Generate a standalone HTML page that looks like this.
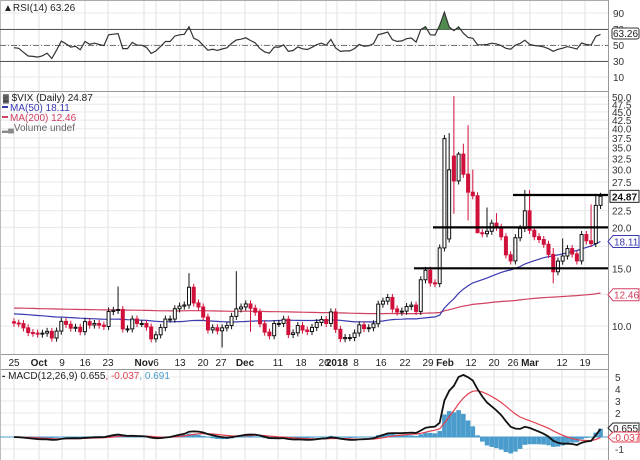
<!DOCTYPE html>
<html><head><meta charset="utf-8"><style>
html,body{margin:0;padding:0;background:#fff;width:640px;height:460px;overflow:hidden}
svg{display:block;font-family:"Liberation Sans",sans-serif}
</style></head><body>
<svg id="s" width="640" height="460" viewBox="0 0 640 460" xmlns="http://www.w3.org/2000/svg"></svg>
<script>
var S=document.getElementById('s');var out=[];
function L(x1,y1,x2,y2,c,w,extra){out.push('<line x1="'+x1+'" y1="'+y1+'" x2="'+x2+'" y2="'+y2+'" stroke="'+c+'" stroke-width="'+(w||1)+'" '+(extra||'')+'/>');}
function R(x,y,w,h,f,st){out.push('<rect x="'+x+'" y="'+y+'" width="'+w+'" height="'+h+'" fill="'+f+'" stroke="'+(st||'none')+'" stroke-width="1"/>');}
function T(x,y,t,s,c,extra){out.push('<text x="'+x+'" y="'+y+'" font-size="'+(s||10)+'" fill="'+(c||'#222')+'" '+(extra||'')+'>'+t+'</text>');}
function P(pts,c,w,extra){out.push('<polyline points="'+pts.map(function(p){return p[0].toFixed(1)+','+p[1].toFixed(1)}).join(' ')+'" fill="none" stroke="'+c+'" stroke-width="'+(w||1)+'" '+(extra||'')+'/>');}
var C=[10.21,10.17,9.87,9.55,9.51,
9.45,9.51,9.63,9.19,9.65,10.33,10.12,9.85,9.91,9.61,10.31,10.07,10.18,10.06,9.97,11.07,11.16,11.23,9.8,9.8,10.5,10.18,
10.18,9.93,9.14,9.4,9.89,10.5,10.5,11.29,11.5,11.59,13.13,11.76,11.43,10.65,9.73,9.88,9.67,9.87,10.03,10.7,11.28,
11.43,11.68,11.33,11.02,10.16,9.58,9.34,10.18,10.18,10.49,9.42,9.53,10.03,9.72,9.62,9.9,10.25,10.47,10.18,11.04,
9.77,9.15,9.22,9.22,9.52,10.08,9.82,9.88,10.16,11.66,11.91,12.22,11.27,11.03,11.1,11.47,11.58,11.08,13.84,14.79,13.54,
13.47,17.31,37.32,29.98,27.73,33.46,29.06,25.61,24.97,19.26,19.13,19.46,20.6,20.02,18.72,16.49,15.8,18.59,19.85,
22.47,19.59,18.73,18.36,17.76,16.54,14.64,15.78,16.35,17.23,16.59,15.8,19.02,18.2,17.86,23.34,24.87];
var N=C.length;
function X(i){return 14+i*4.73;}
function Y(p){return 326-142.3*Math.log(p/10);}
var PX=608;
var vg=[14,39,62,85,108,144,156,180,203,221,245,278,301,326,337,356,381,405,430,436,471,494,513,530,562,585];
vg.forEach(function(x){L(x,0,x,354,'#e2e2e2');L(x,369,x,460,'#e2e2e2');});
[13,29,45,61,77].forEach(function(y){L(0,y,PX,y,'#e8e8e8');});
var pl=[50,47.5,45,42.5,40,37.5,35,32.5,30,27.5,25,22.5,20,17.5,15,12.5,10];
pl.forEach(function(p){L(0,Y(p),PX,Y(p),'#e8e8e8');});
[5,4,3,2,1,0,-1].forEach(function(v){L(0,437-v*12,PX,437-v*12,'#e8e8e8');});
L(0,0.5,PX,0.5,'#aaa');L(0,91.5,PX,91.5,'#999');L(0,354.5,PX,354.5,'#999');L(0,369.5,PX,369.5,'#999');
L(PX+0.5,0,PX+0.5,460,'#999');L(0.5,0,0.5,460,'#bbb');
L(0,29.5,PX,29.5,'#555');L(0,61.5,PX,61.5,'#555');L(0,45.5,PX,45.5,'#777',1,'stroke-dasharray="6,2,1,2"');
var ag=0,al=0,rsi=[];var pre=[10.4,10.3,10.5,10.2,10.4,10.1,10.3,10.0,10.2,10.3,10.1,10.4,10.2,10.3];
var all=pre.concat(C);
for(var k=1;k<all.length;k++){var d=all[k]-all[k-1];var g=d>0?d:0,l=d<0?-d:0;if(k<=14){ag+=g/14;al+=l/14;}else{ag=(ag*13+g)/14;al=(al*13+l)/14;}
 if(k>=pre.length){var r=al==0?100:100-100/(1+ag/al);rsi.push(r);}}
var rp=rsi.map(function(r,i){return [X(i),45-(r-50)*0.8];});
rp.forEach(function(p,i){if(p[1]<29.5&&i>0&&i<rp.length-1){var a=rp[i-1],b=rp[i+1];var x0=a[0]+(p[0]-a[0])*(29.5-a[1])/(p[1]-a[1]);var x1=p[0]+(b[0]-p[0])*(p[1]-29.5)/(p[1]-b[1]);out.push('<polygon points="'+x0+',29.5 '+p[0]+','+p[1]+' '+x1+',29.5" fill="#4f8a4f"/>');}});
P(rp,'#333',1.2);
T(3,11,'<tspan font-weight="bold">&#9650;</tspan>RSI(14) 63.26',10,'#222');
[[90,13],[70,29],[50,45],[30,61],[10,77]].forEach(function(a){T(613,a[1]+4,a[0],10,'#333');});
out.push('<rect x="612" y="28" width="27" height="11" fill="#fff" stroke="#333" rx="2"/>');T(613,37,'63.26',10,'#222');
function sma(n,pad){var arr=[];for(var j=0;j<n;j++)arr.push(pad);arr=arr.concat(C);var res=[];for(var i=0;i<N;i++){var s=0;for(var j=i+1;j<=i+n;j++)s+=arr[j];res.push(s/n);}return res;}
var m50=sma(50,10.9),m200=sma(200,11.35);
P(m200.map(function(v,i){return [X(i),Y(v)]}),'#d04060',1.2);
P(m50.map(function(v,i){return [X(i),Y(v)]}),'#3a3ab0',1.2);
var hi={20:11.4,22:13.2,37:14.5,47:14.7,92:38.8,93:50.3,94:34,95:36,96:41,97:30,100:23,102:22.1,108:26,109:26,114:17.3,116:18.5,122:23.5,123:25};
var lo={93:22,96:21,98:19.3,114:13.5,44:8.6,50:9.6};
for(var i=0;i<N;i++){var o=i==0?10.3:C[i-1];if(i==92)o=18.44;if(i==93)o=33;var c=C[i];
 var h=hi[i]||Math.max(o,c)*1.025,lw=lo[i]||Math.min(o,c)*0.975;var x=X(i);var up=c>=o;var col=up?'#111':'#d0103a';
 L(x,Y(h),x,Y(lw),col,1);var yt=Y(Math.max(o,c)),yb=Y(Math.min(o,c));var hh=Math.max(yb-yt,1);
 if(up)R(x-1.5,yt,3,hh,'#fff','#111');else R(x-1.5,yt,3,hh,'#d0103a','#d0103a');}
L(414,Y(15),PX,Y(15),'#000',2.2);L(433,Y(20),PX,Y(20),'#000',2.2);L(513,195,PX,195,'#000',2.2);
T(3,101,'<tspan font-size="8">&#9619;</tspan> $VIX (Daily) 24.87',10,'#222');
L(2,107,8,107,'#3a3ab0',2);T(10,111,'MA(50) 18.11',10,'#3a3ab0');
L(2,117,8,117,'#d04060',2);T(10,121,'MA(200) 12.46',10,'#d04060');
T(2,131,'<tspan font-size="8" fill="#888">&#9602;&#9604;</tspan>Volume undef',10,'#666');
pl.forEach(function(p){if(p==25||p==12.5||p==17.5)return;var y=Y(p);T(612,y+4,p.toFixed(1),10,'#333');});
out.push('<rect x="610" y="'+(Y(24.87)-6)+'" width="29" height="12" fill="#fff" stroke="#222"/>');T(612,Y(24.87)+4,'<tspan font-weight="bold">24.87</tspan>',10,'#111');
out.push('<polygon points="608,'+Y(18.11)+' 613,'+(Y(18.11)-6)+' 639,'+(Y(18.11)-6)+' 639,'+(Y(18.11)+6)+' 613,'+(Y(18.11)+6)+'" fill="#fff" stroke="#3a3ab0"/>');T(614,Y(18.11)+4,'18.11',10,'#3a3ab0');
out.push('<polygon points="608,'+Y(12.46)+' 613,'+(Y(12.46)-6)+' 639,'+(Y(12.46)-6)+' 639,'+(Y(12.46)+6)+' 613,'+(Y(12.46)+6)+'" fill="#fff" stroke="#d04060"/>');T(614,Y(12.46)+4,'12.46',10,'#d04060');
var xl=[[14,'25'],[39,'Oct',1],[62,'9'],[85,'16'],[108,'23'],[144,'Nov',1],[156,'6'],[180,'13'],[203,'20'],[221,'27'],[245,'Dec',1],[278,'11'],[301,'18'],[324,'26'],[337,'2018',1],[356,'8'],[381,'16'],[405,'22'],[428,'29'],[445,'Feb',1],[471,'12'],[494,'20'],[513,'26'],[530,'Mar',1],[562,'12'],[585,'19']];
xl.forEach(function(a){T(a[0],366,a[1],10,'#222','text-anchor="middle"'+(a[2]?' font-weight="bold"':''));});
function ema(arr,n){var k=2/(n+1),e=arr[0],r=[];arr.forEach(function(v){e=v*k+e*(1-k);r.push(e);});return r;}
var padC=[];for(var j=0;j<40;j++)padC.push(10.3);padC=padC.concat(C);
var e12=ema(padC,12),e26=ema(padC,26),mac=e12.map(function(v,i){return v-e26[i];}),sig=ema(mac,9);
mac=mac.slice(40);sig=sig.slice(40);
var z=437,u=12;
for(var i=0;i<N;i++){var h=mac[i]-sig[i];var y=z-h*u;R(X(i)-2.3,Math.min(y,z),4.6,Math.max(Math.abs(h*u),0.5),'#4a9ccc');}
L(0,z,PX,z,'#4a9ccc',1);
P(sig.map(function(v,i){return [X(i),z-v*u]}),'#e04050',1.2);
P(mac.map(function(v,i){return [X(i),z-v*u]}),'#111',1.8);
T(2,379,'<tspan font-weight="bold">-</tspan> MACD(12,26,9) 0.655<tspan fill="#e04050">, -0.037</tspan><tspan fill="#4a9ccc">, 0.691</tspan>',10,'#222');
[[5,377],[4,389],[3,401],[2,413],[-1,449]].forEach(function(a){T(615,a[1]+4,a[0],10,'#333');});
out.push('<polygon points="608,428 613,423 639,423 639,433 613,433" fill="#fff" stroke="#222"/>');T(613,432,'0.655',10,'#222');
out.push('<polygon points="608,437 613,432 639,432 639,442 613,442" fill="#fff" stroke="#e04050"/>');T(612,441,'-0.037',10,'#e04050');
S.innerHTML=out.join('');
</script>
</body></html>
